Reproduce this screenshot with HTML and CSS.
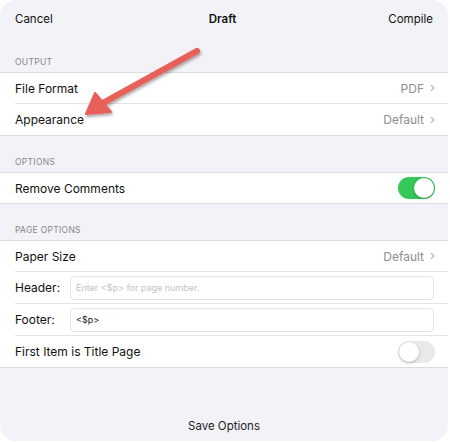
FILE: index.html
```html
<!DOCTYPE html>
<html>
<head>
    <meta charset="UTF-8">
    <title>Draft</title>
    <link rel="stylesheet" href="styles.css">
</head>
<body>
    <div class="sheet">
        <div class="nav">
            <span class="nav-left">Cancel</span>
            <span class="nav-title">Draft</span>
            <span class="nav-right">Compile</span>
        </div>

        <div class="section-head">Output</div>
        <div class="group">
            <div class="row">
                <span class="label">File Format</span>
                <span class="value">PDF <svg class="chev" viewBox="0 0 5 8"><path d="M1 1l3 3-3 3" /></svg></span>
            </div>
            <div class="row">
                <span class="label">Appearance</span>
                <span class="value">Default <svg class="chev" viewBox="0 0 5 8"><path d="M1 1l3 3-3 3" /></svg></span>
            </div>
        </div>

        <div class="section-head">Options</div>
        <div class="group">
            <div class="row">
                <span class="label">Remove Comments</span>
                <span class="switch on"><span class="knob"></span></span>
            </div>
        </div>

        <div class="section-head">Page Options</div>
        <div class="group">
            <div class="row">
                <span class="label">Paper Size</span>
                <span class="value">Default <svg class="chev" viewBox="0 0 5 8"><path d="M1 1l3 3-3 3" /></svg></span>
            </div>
            <div class="row">
                <span class="label field-label">Header:</span>
                <span class="field placeholder">Enter &lt;$p&gt; for page number.</span>
            </div>
            <div class="row">
                <span class="label field-label">Footer:</span>
                <span class="field">&lt;$p&gt;</span>
            </div>
            <div class="row">
                <span class="label">First Item is Title Page</span>
                <span class="switch"><span class="knob"></span></span>
            </div>
        </div>

        <div class="footer">Save Options</div>

        <!-- annotation arrow drawn over the sheet -->
        <svg class="arrow" width="450" height="443" viewBox="0 0 450 443">
            <defs>
                <filter id="shadow" x="-20%" y="-20%" width="140%" height="140%">
                    <feDropShadow dx="1" dy="2" stdDeviation="1.5" flood-color="#000" flood-opacity="0.35" />
                </filter>
            </defs>
            <g filter="url(#shadow)" fill="#e8605a" stroke="#e8605a" stroke-linejoin="round" stroke-linecap="round">
                <line x1="197" y1="51" x2="103" y2="103" stroke-width="6" />
                <polygon points="86,114 95,93 111,112" stroke-width="2" />
            </g>
        </svg>
    </div>
</body>
</html>
```

FILE: styles.css
```css
body {
    margin: 0;
    background: #ffffff;
    font-family: Inter, "Noto Sans", sans-serif;
    color: #111;
}
.sheet {
    position: relative;
    width: 448px;
    height: 441px;
    background: #f2f2f7;
    border-radius: 16px;
    overflow: hidden;
    display: flex;
    flex-direction: column;
}
.nav {
    height: 37px;
    display: flex;
    align-items: center;
    justify-content: space-between;
    padding: 0 15px 0 15px;
    font-size: 11.5px;
    box-sizing: border-box;
}
.nav-title {
    font-weight: 600;
    position: relative;
    left: 2px;
}
.section-head {
    height: 35px;
    display: flex;
    align-items: flex-end;
    padding: 0 15px 5px;
    box-sizing: border-box;
    font-size: 8.5px;
    text-transform: uppercase;
    letter-spacing: 0.3px;
    color: #86868b;
}
.group + .section-head {
    height: 36px;
}
.group {
    background: #fff;
    border-top: 1px solid #dcdce0;
    border-bottom: 1px solid #dcdce0;
    padding-left: 15px;
}
.row {
    height: 32px;
    display: flex;
    align-items: center;
    justify-content: space-between;
    padding-right: 13px;
    border-top: 1px solid #e4e4e8;
    box-sizing: border-box;
    font-size: 12px;
}
.row:first-child {
    height: 30px;
    border-top: none;
}
.value {
    color: #8e8e93;
    display: flex;
    align-items: center;
    gap: 6px;
}
.chev {
    width: 5px;
    height: 8px;
    fill: none;
    stroke: #b8b8bd;
    stroke-width: 1.1;
}
.field-label {
    width: 55px;
    flex: none;
}
.field {
    flex: 1;
    height: 24px;
    border: 1px solid #e2e2e6;
    border-radius: 4px;
    box-sizing: border-box;
    display: flex;
    align-items: center;
    padding-left: 5px;
    font-size: 9px;
    color: #222;
    margin-right: 1px;
}
.placeholder {
    color: #c2c2c6;
}
.switch {
    width: 37px;
    height: 22px;
    border-radius: 11px;
    background: #e9e9eb;
    position: relative;
    flex: none;
}
.switch .knob {
    position: absolute;
    top: 1px;
    left: 1px;
    width: 20px;
    height: 20px;
    border-radius: 50%;
    background: #fff;
    box-shadow: 0 1px 3px rgba(0, 0, 0, 0.25);
}
.switch.on {
    background: #34c759;
}
.switch.on .knob {
    left: 16px;
}
.footer {
    flex: 1;
    display: flex;
    align-items: flex-end;
    justify-content: center;
    padding-bottom: 8px;
    font-size: 11.5px;
    color: #222;
}
.arrow {
    position: absolute;
    left: 0;
    top: 0;
    pointer-events: none;
}
```
